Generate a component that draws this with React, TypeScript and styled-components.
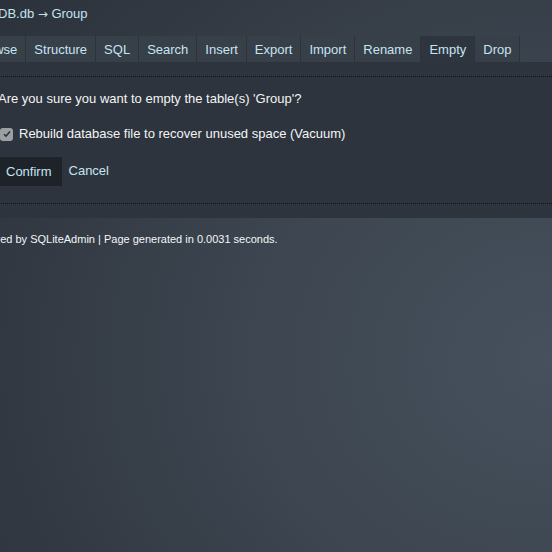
import React, { FC } from 'react';
import styled, { createGlobalStyle } from 'styled-components';

const GlobalStyle = createGlobalStyle`
  html, body {
    margin: 0;
    padding: 0;
    height: 100%;
  }
  body {
    overflow: hidden;
    font-family: 'Liberation Sans', Arial, Helvetica, sans-serif;
    font-size: 13px;
    color: #f2f4f6;
    background: radial-gradient(ellipse 130% 110% at 100% 65%, #46515d 0%, #3d4651 40%, #343b45 70%, #2b3139 100%);
  }
`;

const Page = styled.div`
  margin-left: -34px;
  width: 640px;
`;

const Header = styled.div`
  height: 36px;
  padding-left: 34px;
  display: flex;
  align-items: flex-start;
`;

const Crumb = styled.a`
  margin-top: 6px;
  margin-left: -2px;
  color: #c3e3f3;
  text-decoration: none;
  line-height: 16px;
`;

const Arrow = styled.span`
  font-family: 'DejaVu Sans', sans-serif;
  font-size: 12px;
`;

const Tabs = styled.div`
  display: flex;
  height: 26px;
`;

const Tab = styled.a<{ $active?: boolean }>`
  display: flex;
  align-items: center;
  padding: 0 8px;
  border-right: 1px solid #2d333b;
  background: ${(p) => (p.$active ? '#2f353e' : '#373f49')};
  color: #c6e4f2;
  text-decoration: none;
`;

const Panel = styled.div`
  background: #2e343d;
  padding: 14px 0 14px;
`;

const Box = styled.div`
  border-top: 1px dotted #0d1014;
  border-bottom: 1px dotted #0d1014;
  padding: 14px 0 17px 32px;
  display: flex;
  flex-direction: column;
`;

const Question = styled.div`
  line-height: 16px;
`;

const CheckRow = styled.label`
  display: flex;
  align-items: center;
  margin-top: 19px;
  line-height: 16px;
`;

const Check = styled.span`
  width: 13px;
  height: 13px;
  border-radius: 3px;
  background: #9c9fa3;
  display: flex;
  align-items: center;
  justify-content: center;
  margin: 0 6px 0 2px;
`;

const Actions = styled.div`
  display: flex;
  align-items: center;
  margin-top: 15px;
`;

const ConfirmButton = styled.button`
  height: 29px;
  padding: 0 10px 0 8px;
  margin-left: 0;
  border: none;
  background: #1e2329;
  color: #c6e4f2;
  font-family: inherit;
  font-size: 13px;
`;

const CancelLink = styled.a`
  margin-left: 7px;
  margin-top: -3px;
  color: #c6e4f2;
  text-decoration: none;
`;

const Footer = styled.div`
  padding: 15px 0 0 3px;
  font-size: 11px;
  color: #f4f6f8;
`;

const tabs = ['Browse', 'Structure', 'SQL', 'Search', 'Insert', 'Export', 'Import', 'Rename', 'Empty', 'Drop'];

const CheckMark: FC = () => (
  <svg width='10' height='10' viewBox='0 0 10 10'>
    <path d='M2 5.2l2 2L8 2.6' fill='none' stroke='#2b3036' strokeWidth='1.6' />
  </svg>
);

const App: FC = () => (
  <>
    <GlobalStyle />
    <Page>
      <Header>
        <Crumb href='#'>
          DB.db <Arrow>→</Arrow> Group
        </Crumb>
      </Header>
      <Tabs>
        {tabs.map((t) => (
          <Tab key={t} href='#' $active={t === 'Empty'}>
            {t}
          </Tab>
        ))}
      </Tabs>
      <Panel>
        <Box>
          <Question>Are you sure you want to empty the table(s) 'Group'?</Question>
          <CheckRow>
            <Check>
              <CheckMark />
            </Check>
            Rebuild database file to recover unused space (Vacuum)
          </CheckRow>
          <Actions>
            <ConfirmButton>Confirm</ConfirmButton>
            <CancelLink href='#'>Cancel</CancelLink>
          </Actions>
        </Box>
      </Panel>
      <Footer>Powered by SQLiteAdmin | Page generated in 0.0031 seconds.</Footer>
    </Page>
  </>
);

export default App;
